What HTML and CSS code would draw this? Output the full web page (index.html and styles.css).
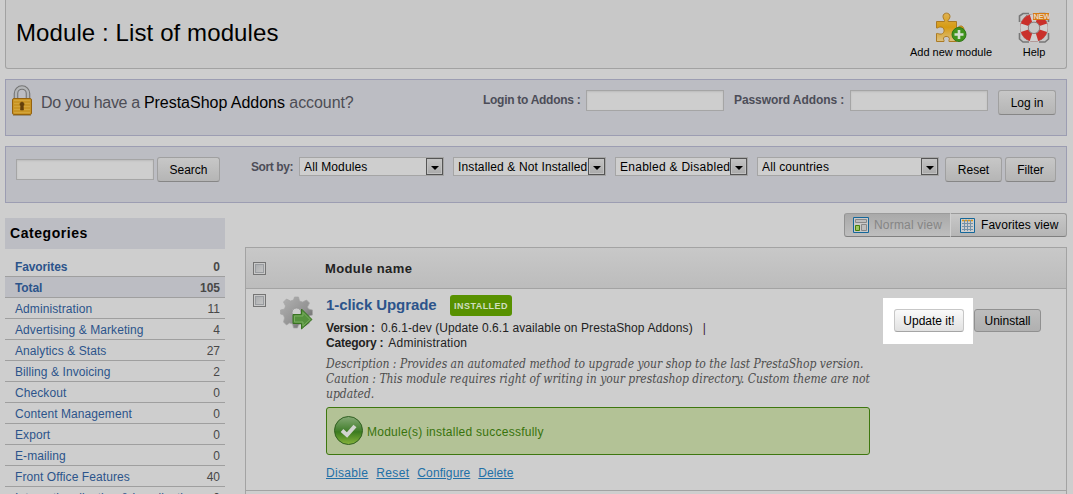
FILE: index.html
```html
<!DOCTYPE html>
<html lang="en">
<head>
<meta charset="utf-8">
<title>Module : List of modules</title>
<link rel="stylesheet" href="styles.css">
</head>
<body>
<div class="page">
  <header class="toolbar">
    <h1>Module : List of modules</h1>
    <nav class="tools">
      <a class="tool tool-add">
        <svg width="34" height="33" viewBox="0 0 34 33">
          <defs><linearGradient id="gold" x1="0" y1="0" x2="0" y2="1"><stop offset="0" stop-color="#e0b251"/><stop offset=".5" stop-color="#d69b13"/><stop offset="1" stop-color="#dcc184"/></linearGradient></defs>
          <path d="M2.500 9.500H10.500C11 8 9 7 9 4.500C9 0 16 0 16 4.500C16 7 13.500 8 14 9.500H22.500V16C24 16 25 13.500 27.500 14C31 15 30.500 21 27 21.500C25 22 24 19.500 22.500 20V29.500H15C14.500 28 16 27 15 25.500C14 24 10 24 9.500 26C9 27.500 10.500 28 10 29.500H2.500V21.500C4 21 5 22.500 7.500 22C11 21 11 15.500 7 15C5 14.500 4 16.500 2.500 16Z" fill="url(#gold)" stroke="#ab7a24"/>
          <circle cx="25" cy="22.500" r="7" fill="#40941c" stroke="#2f7617"/><path d="M25 18v9M20.500 22.500h9" stroke="#d4ded0" stroke-width="2.600"/>
        </svg>
        <span>Add new module</span>
      </a>
      <a class="tool tool-help">
        <svg width="32" height="33" viewBox="0 0 32 33">
          <path d="M1.500 10V4L5 1.500h6M21 1.500h6L30.500 4v6M30.500 21v6L27 30h-6M11 30H5l-3.500-3v-6" fill="none" stroke="#777" stroke-width="1.600"/>
          <path d="M3 10 9 3M23 3l6 7M3 21l6 7M23 28l6-7" fill="none" stroke="#8b8b8b"/>
          <circle cx="16" cy="15.800" r="14" fill="#8a4a46"/>
          <circle cx="16" cy="15.800" r="9.800" fill="none" stroke="#d0d0d0" stroke-width="8"/>
          <circle cx="16" cy="15.800" r="9.800" fill="none" stroke="#ca302b" stroke-width="8" pathLength="100" stroke-dasharray="15 10" stroke-dashoffset="-5"/>
          <circle cx="16" cy="15.800" r="5.700" fill="#c8c8c8" stroke="#8d7f7f"/>
          <path d="M15 1h16v7H15z" fill="#d77b13"/>
          <text x="15.500" y="7.300" class="new-mark">NEW</text>
        </svg>
        <span>Help</span>
      </a>
    </nav>
  </header>

  <section class="panel addons">
    <svg class="lock" width="22" height="32" viewBox="0 0 22 32">
      <path d="M5 14V8.500a6 6 0 0 1 12 0V14" fill="none" stroke="#747474" stroke-width="4.600"/>
      <path d="M5 14V8.500a6 6 0 0 1 12 0V14" fill="none" stroke="#b4b6b8" stroke-width="2.400"/>
      <rect x="1.500" y="13.500" width="19" height="16" rx="1.500" fill="#c99525" stroke="#95620f"/>
      <path d="M3 15.500h16M3 18.500h16M3 21.500h16M3 24.500h16M3 27.500h16" stroke="#d3a43a"/>
      <path d="M11 17a2.300 2.300 0 0 0-1.300 4L9.500 25h3l-.2-4A2.300 2.300 0 0 0 11 17Z" fill="#633f0b" stroke="#633f0b" stroke-width=".6"/>
      <path d="M2 30.500h18" stroke="#99907c"/>
    </svg>
    <p class="question"><span class="q1">Do you have a </span><b>PrestaShop Addons</b><span class="q2"> account?</span></p>
    <label class="login-label">Login to Addons :</label><input class="field">
    <label class="password-label">Password Addons :</label><input class="field">
    <button class="btn btn-login">Log in</button>
  </section>

  <section class="panel filters">
    <input class="field"><button class="btn btn-search">Search</button>
    <label class="sort-label">Sort by:</label>
    <div class="select sel-modules"><span>All Modules</span><i></i></div>
    <div class="select sel-installed"><span>Installed &amp; Not Installed</span><i></i></div>
    <div class="select sel-enabled"><span>Enabled &amp; Disabled</span><i></i></div>
    <div class="select sel-countries"><span>All countries</span><i></i></div>
    <button class="btn btn-reset">Reset</button><button class="btn btn-filter">Filter</button>
  </section>

  <div class="columns">
    <aside class="sidebar">
      <h2>Categories</h2>
      <ul>
        <li class="strong"><a>Favorites</a><span>0</span></li>
        <li class="strong current"><a>Total</a><span>105</span></li>
        <li><a>Administration</a><span>11</span></li>
        <li><a>Advertising &amp; Marketing</a><span>4</span></li>
        <li><a>Analytics &amp; Stats</a><span>27</span></li>
        <li><a>Billing &amp; Invoicing</a><span>2</span></li>
        <li><a>Checkout</a><span>0</span></li>
        <li><a>Content Management</a><span>0</span></li>
        <li><a>Export</a><span>0</span></li>
        <li><a>E-mailing</a><span>0</span></li>
        <li><a>Front Office Features</a><span>40</span></li>
        <li><a>Internationalization &amp; Localization</a><span>0</span></li>
      </ul>
    </aside>

    <main>
      <div class="views">
        <button class="view active">
          <svg width="16" height="16" viewBox="0 0 16 16"><path d="M.5.5h15v15H.5z" fill="#c9c9c9" stroke="#14679a"/><path d="M2.500 2.500h11v3h-11zM8.500 7.500h5v6h-5z" fill="#bdbdbd" stroke="#888"/><path d="M2.500 8.500h4v5h-4z" fill="#9fc65d" stroke="#457e08"/></svg>
          <span>Normal view</span>
        </button>
        <button class="view">
          <svg width="15" height="15" viewBox="0 0 15 15"><path d="M.5.5h14v14H.5z" fill="#cecece" stroke="#14679a"/><path d="M2 5.500h11M2 8.500h11M2 11.500h11M4.500 2v11M7.500 2v11M10.500 2v11" stroke="#7592a7"/><path d="M2 2.500h11" stroke="#d8971e" stroke-width="1.500" stroke-dasharray="2 1"/></svg>
          <span>Favorites view</span>
        </button>
      </div>
      <div class="table">
        <div class="table-head"><i class="check"></i><b>Module name</b></div>
        <div class="row">
          <i class="check"></i>
          <svg class="gear" width="34" height="34" viewBox="0 0 34 34">
            <defs><linearGradient id="steel" x1="0" y1="0" x2="1" y2="1"><stop offset="0" stop-color="#b3b3b3"/><stop offset=".6" stop-color="#929292"/><stop offset="1" stop-color="#555"/></linearGradient></defs>
            <path d="M15.500 1h4l1 4 3 1 4-2 3 3-2 4 1 2 4 1v5l-4 1-1 3 2 4-4 3-4-2-3 1-1 3h-4l-1-4-3-1-3 2-3-3 1-4-1-3-3-1v-4l4-1 1-3-2-4 3-3 4 2 3-1Z" fill="url(#steel)" stroke="#a5a5a5" stroke-width=".7"/>
            <circle cx="17.500" cy="16.500" r="4.500" fill="#cecece" stroke="#999"/>
            <path d="M14 18.500h8.500v-5.500l10.500 10.500-10.500 9.500v-5.500h-8.500Z" fill="#55913d" stroke="#397322"/>
            <path d="M15.500 20h8.500v-3.500l7 7-7 6.500v-4h-8.500Z" fill="none" stroke="#7aad60"/>
          </svg>
          <div class="module">
            <div class="title"><h3>1-click Upgrade</h3><span class="badge">INSTALLED</span></div>
            <p class="meta"><b>Version :</b><span class="version">0.6.1-dev (Update 0.6.1 available on PrestaShop Addons)</span><span class="bar">|</span></p>
            <p class="meta"><b>Category :</b><span class="category">Administration</span></p>
            <p class="description">Description : Provides an automated method to upgrade your shop to the last PrestaShop version.<br>Caution : This module requires right of writing in your prestashop directory. Custom theme are not<br>updated.</p>
            <div class="success">
              <svg width="30" height="30" viewBox="0 0 30 30">
                <defs><linearGradient id="green" x1="0" y1="0" x2="0" y2="1"><stop offset="0" stop-color="#86aa76"/><stop offset=".45" stop-color="#4b8436"/><stop offset=".55" stop-color="#3b7b1f"/><stop offset="1" stop-color="#87b43b"/></linearGradient></defs>
                <circle cx="14.500" cy="14.500" r="14" fill="url(#green)" stroke="#315f22"/>
                <path d="m8 14.500 5 4.500 8-9" fill="none" stroke="#d2d4d0" stroke-width="4"/>
              </svg>
              <span>Module(s) installed successfully</span>
            </div>
            <div class="links"><a>Disable</a><a>Reset</a><a>Configure</a><a>Delete</a></div>
          </div>
          <div class="actions">
            <div class="spotlight"><button class="btn btn-update">Update it!</button></div>
            <button class="btn btn-uninstall">Uninstall</button>
          </div>
        </div>
      </div>
    </main>
  </div>
</div>
</body>
</html>
```
FILE: styles.css
```css
* { box-sizing: border-box; }
body { margin: 0; background: #cecece; font: 12px "Liberation Sans", Arial, sans-serif; color: #222; overflow: hidden; }
h1, h2, h3, p, ul { margin: 0; padding: 0; }
ul { list-style: none; }
.page { width: 1073px; height: 494px; padding: 0 6px 0 5px; overflow: hidden; }
svg { display: block; flex: none; }
span, label, b, a { white-space: nowrap; }

.toolbar { height: 69px; display: flex; justify-content: space-between; padding: 0 16px 0 10px; background: #c8c8c8; border: 1px solid #a2a2a2; border-top: 0; border-radius: 0 0 3px 3px; }
h1 { font-size: 24px; font-weight: 400; line-height: 27px; padding-top: 19px; color: #000; letter-spacing: .1px; }
.tools { display: flex; gap: 26px; padding-top: 12px; }
.tool { display: flex; flex-direction: column; align-items: center; font-size: 11px; line-height: 14px; color: #000; }
.tool-add { width: 82px; }
.tool-add span { letter-spacing: .02px; }
.tool-help { width: 32px; }
.new-mark { font-size: 7.500px; font-weight: 700; fill: #e8d6c1; letter-spacing: -.3px; }

.panel { height: 58px; display: flex; align-items: flex-start; background: #bcbdc3; border: 1px solid #9c9db2; }
.addons { height: 57px; margin-top: 10px; padding: 10px 10px 0 5px; }
.lock { margin-top: -5px; }
.question { width: 312px; margin: 3px 130px 0 8px; font-size: 16px; line-height: 20px; color: #4d4d55; flex: none; white-space: pre; }
.question span, .question b { white-space: pre; }
.question b { font-weight: 400; color: #000; letter-spacing: -.02px; }
.q1 { letter-spacing: -.34px; }
.q2 { letter-spacing: -.08px; }
.panel label { font-weight: 700; color: #4c4d58; line-height: 14px; flex: none; }
.login-label { width: 103px; padding-top: 3px; letter-spacing: -.28px; }
.password-label { width: 116px; padding-top: 3px; margin-left: 10px; letter-spacing: -.08px; }
.field { width: 138px; height: 21px; padding: 0; flex: none; background: #cecece; border: 1px solid #a5a5a5; border-radius: 0; box-shadow: inset 0 1px 2px #bcbcbc; }
.btn { height: 25px; flex: none; padding: 0; font: 12px/22px "Liberation Sans", Arial, sans-serif; color: #000; background: linear-gradient(#c7c7c7, #b5b5b5); border: 1px solid #a0a0a0; border-bottom-color: #868686; border-radius: 3px; }
.btn-login { width: 58px; margin-left: 10px; }

.filters { height: 57px; margin-top: 10px; padding: 10px 10px 0; }
.filters .field { margin-top: 2px; }
.btn-search { width: 63px; margin-left: 3px; }
.filters .sort-label { width: 48px; margin-left: 31px; padding-top: 3px; letter-spacing: -.4px; }
.select { height: 19px; display: flex; flex: none; background: #cecece; border: 1px solid #a5a5a5; color: #000; line-height: 18px; padding-left: 4px; margin-right: 9px; }
.select span { flex: 1; width: 0; overflow: hidden; letter-spacing: .13px; }
.select i { width: 17px; height: 17px; display: grid; place-items: center; background: linear-gradient(#c4c4c4, #aaa); border: 1px solid #555; box-shadow: inset 0 0 0 1px #c2c2c2; }
.select i::before { content: ""; border: 4px solid transparent; border-top-color: #000; border-bottom: 0; margin-top: 2px; }
.sel-modules { width: 145px; }
.sel-installed { width: 153px; }
.sel-enabled { width: 133px; }
.sel-enabled span { letter-spacing: .27px; }
.sel-countries { width: 182px; margin-right: 6px; }
.btn-reset { width: 57px; margin-right: 3px; }
.btn-filter { width: 51px; }

.columns { display: flex; gap: 20px; padding-top: 10px; }
.sidebar { width: 220px; padding-top: 5px; flex: none; }
h2 { height: 31px; padding-left: 5px; line-height: 30px; font-size: 14px; color: #000; background: #bcbdc3; letter-spacing: .55px; margin-bottom: 7px; }
li { height: 21px; display: flex; justify-content: space-between; padding: 0 5px 0 10px; line-height: 22px; border-bottom: 1px solid #9f9f9f; color: #484848; }
li a { color: #2c548b; letter-spacing: .08px; }
.strong { font-weight: 700; }
.strong a { letter-spacing: -.12px; }
.current { background: #bcbdc3; }

main { width: 822px; flex: none; }
.views { display: flex; justify-content: flex-end; height: 24px; }
.view { width: 116px; display: flex; align-items: center; gap: 6px; padding: 0 0 0 9px; font: 12px "Liberation Sans", Arial, sans-serif; color: #000; background: linear-gradient(#c8c8c8, #b5b5b5); border: 1px solid #9b9b9b; border-left: 0; border-bottom-color: #808080; border-radius: 0 3px 3px 0; }
.view.active { width: 107px; gap: 5px; padding-left: 8px; color: #858585; background: linear-gradient(#a9a9a9, #bebebe); border-left: 1px solid #929292; border-right-color: #d0d0d0; border-radius: 3px 0 0 3px; }
.view span { letter-spacing: .05px; }
.view.active span { letter-spacing: .18px; }
.table { margin-top: 10px; border: 1px solid #a3a3a3; border-bottom: 0; height: 260px; }
.table-head { height: 41px; display: flex; padding: 14px 0 0 7px; background: linear-gradient(#c8c8c8, #bcbcbc); border-bottom: 1px solid #a3a3a3; }
.table-head b { margin-left: 59px; margin-top: -1px; font-size: 13px; line-height: 15px; letter-spacing: .38px; }
.check { width: 13px; height: 13px; flex: none; border: 1px solid #747474; background: linear-gradient(135deg, #a6a8ab, #c9c9c9); box-shadow: inset 0 0 0 1px #c9c9c9, inset 0 0 0 2px #999ca0; }
.row { height: 202px; display: flex; align-items: flex-start; padding: 5px 25px 0 7px; border-bottom: 1px solid #a3a3a3; }
.gear { margin: 2px 0 0 13px; }
.module { width: 544px; margin-left: 13px; flex: none; }
.title { display: flex; height: 27px; }
h3 { width: 124px; font-size: 15px; line-height: 21px; color: #2c548b; letter-spacing: -.08px; }
.badge { height: 21px; width: 62px; margin-top: 1px; border-radius: 3px; background: #589100; color: #d0dec0; font-size: 9px; font-weight: 700; line-height: 23px; text-align: center; letter-spacing: .45px; }
.meta { line-height: 15px; white-space: nowrap; }
.meta b { letter-spacing: -.2px; }
.version { margin-left: 6px; letter-spacing: .09px; }
.category { margin-left: 5px; letter-spacing: .2px; }
.bar { margin-left: 10px; color: #402238; }
.description { margin-top: 6px; font: italic 12px/15px "DejaVu Serif Condensed", "DejaVu Serif", serif; color: #4d4d4d; white-space: nowrap; }
.success { height: 48px; margin-top: 5px; padding-left: 7px; display: flex; align-items: center; gap: 3px; background: #b3c296; border: 1px solid #3e770f; border-radius: 3px; color: #38730c; }
.success span { letter-spacing: .25px; padding-top: 2px; }
.links { display: flex; gap: 8px; margin-top: 11px; line-height: 15px; color: #2270a7; }
.links a { letter-spacing: .33px; text-decoration: underline; }
.links a:nth-child(n+3) { letter-spacing: .1px; }
.actions { display: flex; align-items: flex-start; margin-left: 13px; padding-top: 4px; }
.spotlight { width: 90px; height: 46px; padding: 11px 0 0 11px; background: #fff; flex: none; }
.actions .btn { height: 23px; line-height: 20px; display: block; }
.btn-update { width: 70px; background: linear-gradient(#fafafa, #e1e1e1); border-color: #c7c7c7; border-bottom-color: #a5a5a5; }
.btn-uninstall { width: 67px; margin: 11px 0 0 1px; background: linear-gradient(#bdbdbd, #b0b0b0); border-color: #909090; }
```
